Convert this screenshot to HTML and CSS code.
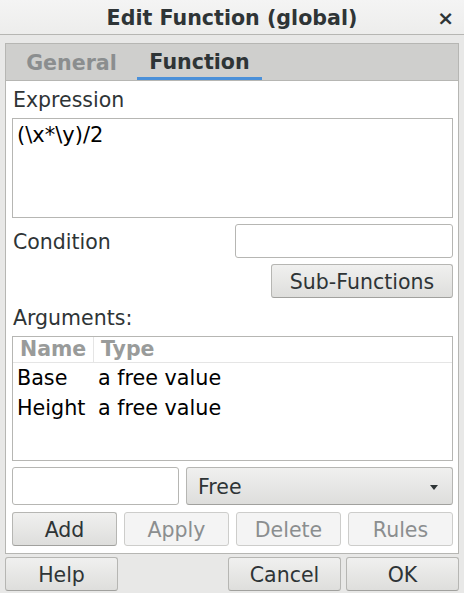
FILE: index.html
```html
<!DOCTYPE html>
<html>
<head>
<meta charset="utf-8">
<link rel="stylesheet" href="styles.css">
</head>
<body>
<div class="window">
  <div class="titlebar">
    <span class="title">Edit Function (global)</span>
    <span class="close">×</span>
  </div>
  <div class="main">
    <div class="notebook">
      <div class="tabs">
        <div class="tab tab-general">General</div>
        <div class="tab tab-active">Function</div>
      </div>
      <div class="page">
        <div class="label label-expr">Expression</div>
        <div class="textarea">(\x*\y)/2</div>
        <div class="row row-cond">
          <div class="label label-cond">Condition</div>
          <div class="entry entry-cond"></div>
        </div>
        <div class="row row-sub">
          <div class="btn btn-sub">Sub-Functions</div>
        </div>
        <div class="label label-args">Arguments:</div>
        <div class="tree">
          <div class="tree-head">
            <div class="col col-name">Name</div>
            <div class="col col-type">Type</div>
          </div>
          <div class="tree-row">
            <div class="cell cell-name">Base</div>
            <div class="cell">a free value</div>
          </div>
          <div class="tree-row">
            <div class="cell cell-name">Height</div>
            <div class="cell">a free value</div>
          </div>
        </div>
        <div class="row row-entry">
          <div class="entry entry-arg"></div>
          <div class="combo">
            <span>Free</span>
            <span class="arrow"></span>
          </div>
        </div>
        <div class="row row-btns">
          <div class="btn">Add</div>
          <div class="btn btn-disabled">Apply</div>
          <div class="btn btn-disabled">Delete</div>
          <div class="btn btn-disabled">Rules</div>
        </div>
      </div>
    </div>
    <div class="actions">
      <div class="btn btn-action">Help</div>
      <div class="spacer"></div>
      <div class="btn btn-action">Cancel</div>
      <div class="btn btn-action">OK</div>
    </div>
  </div>
</div>
</body>
</html>
```

FILE: styles.css
```css
* { box-sizing: border-box; }
html, body {
  margin: 0;
  padding: 0;
}
body {
  width: 464px;
  height: 593px;
  background: #e8e8e7;
  font-family: "DejaVu Sans", sans-serif;
  font-size: 20.5px;
  color: #2e3436;
  overflow: hidden;
}
.window {
  width: 464px;
  height: 593px;
  display: flex;
  flex-direction: column;
}
.titlebar {
  height: 35px;
  background: linear-gradient(#f4f4f4, #ededec);
  border-bottom: 1px solid #b6b6b3;
  display: flex;
  align-items: center;
  justify-content: center;
  position: relative;
}
.title {
  font-weight: bold;
  font-size: 20.6px;
  color: #2e3436;
  padding-top: 1px;
}
.close {
  position: absolute;
  right: 10px;
  top: 6px;
  font-size: 20px;
  font-weight: bold;
  color: #2e3436;
}
.main {
  padding: 8px 5px 0 5px;
  display: flex;
  flex-direction: column;
}
.notebook {
  border: 1px solid #b6b6b3;
  height: 511px;
  display: flex;
  flex-direction: column;
}
.tabs {
  height: 37px;
  background: #cfcfcd;
  border-bottom: 1px solid #b6b6b3;
  display: flex;
}
.tab {
  font-weight: bold;
  font-size: 20.6px;
  display: flex;
  align-items: center;
  justify-content: center;
  padding-top: 1px;
}
.tab-general {
  width: 131px;
  color: #8b8e8f;
}
.tab-active {
  width: 125px;
  color: #2e3436;
  border-bottom: 3px solid #4a90d9;
  padding-top: 3px;
}
.page {
  flex: 1;
  background: #ffffff;
  padding: 0 5px 6px 6px;
  display: flex;
  flex-direction: column;
}
.label {
  font-size: 20.5px;
  color: #2e3436;
  padding-left: 1px;
}
.label-expr {
  height: 37px;
  padding-top: 7px;
}
.label-cond {
  padding-top: 2px;
}
.textarea {
  height: 100px;
  border: 1px solid #b6b6b3;
  padding: 4px 4px;
  font-size: 21px;
  color: #000;
}
.row {
  display: flex;
  align-items: center;
}
.row-cond {
  margin-top: 6px;
  height: 34px;
  justify-content: space-between;
}
.entry {
  border: 1px solid #b6b6b3;
  border-radius: 3px;
  background: #fff;
}
.entry-cond {
  width: 218px;
  height: 34px;
}
.row-sub {
  margin-top: 6px;
  height: 34px;
  justify-content: flex-end;
}
.btn {
  height: 34px;
  border: 1px solid #b6b6b3;
  border-bottom-color: #a1a19e;
  border-radius: 3px;
  background: linear-gradient(#f0f0ef, #dededc);
  display: flex;
  align-items: center;
  justify-content: center;
  font-size: 20.5px;
  color: #2e3436;
  padding-top: 2px;
}
.btn-sub {
  width: 182px;
}
.label-args {
  height: 38px;
  padding-top: 8px;
}
.tree {
  height: 125px;
  border: 1px solid #b6b6b3;
  display: flex;
  flex-direction: column;
}
.tree-head {
  height: 26px;
  display: flex;
  border-bottom: 1px solid #e5e5e5;
}
.col {
  font-weight: bold;
  color: #999b9a;
  font-size: 20.5px;
  display: flex;
  align-items: center;
  line-height: 1;
}
.col-name {
  width: 81px;
  padding-left: 7px;
  border-right: 1px solid #e5e5e5;
}
.col-type {
  padding-left: 7px;
}
.tree-row {
  height: 30px;
  display: flex;
  align-items: center;
  color: #000;
  font-size: 20.7px;
}
.cell-name {
  width: 81px;
  padding-left: 4px;
}
.cell {
  white-space: nowrap;
}
.tree-row .cell:last-child {
  padding-left: 4px;
}
.row-entry {
  margin-top: 6px;
  height: 38px;
  gap: 7px;
}
.entry-arg {
  width: 167px;
  height: 38px;
}
.combo {
  flex: 1;
  height: 38px;
  border: 1px solid #b6b6b3;
  border-bottom-color: #a1a19e;
  border-radius: 3px;
  background: linear-gradient(#f0f0ef, #dededc);
  display: flex;
  align-items: center;
  justify-content: space-between;
  padding: 2px 14px 0 11px;
  font-size: 20.5px;
  color: #2e3436;
}
.arrow {
  width: 0;
  height: 0;
  border-left: 4px solid transparent;
  border-right: 4px solid transparent;
  border-top: 5px solid #2e3436;
}
.row-btns {
  margin-top: 7px;
  height: 34px;
  gap: 7px;
}
.row-btns .btn {
  flex: 1;
}
.btn-disabled {
  background: #f4f4f4;
  border-color: #cdcdcb;
  color: #8b8e8f;
}
.actions {
  margin-top: 3px;
  display: flex;
  gap: 5px;
  height: 34px;
}
.btn-action {
  width: 113px;
}
.spacer {
  flex: 1;
}
```
